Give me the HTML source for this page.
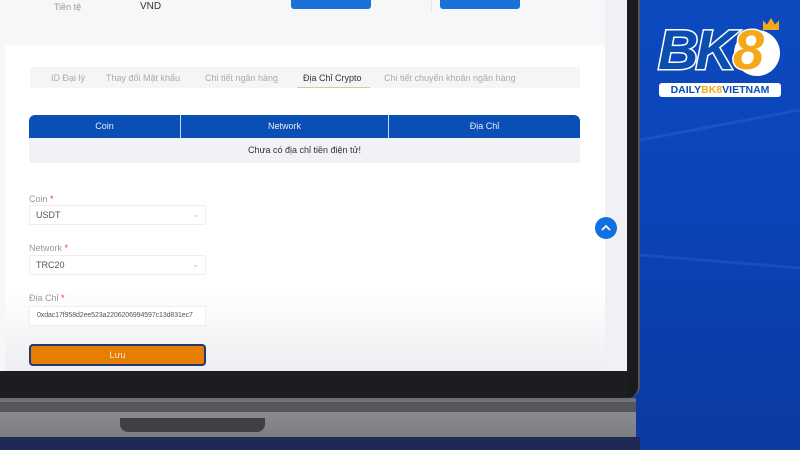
<!DOCTYPE html>
<html><head><meta charset="utf-8"><style>
*{margin:0;padding:0;box-sizing:border-box}
body{width:800px;height:450px;overflow:hidden;position:relative;background:#0b47b8;font-family:"Liberation Sans","Noto Sans CJK SC",sans-serif}
.bg{position:absolute;left:630px;top:0;width:170px;height:450px;background:linear-gradient(180deg,#0d49bf 0%,#0a45b8 40%,#0b3fae 70%,#0c3a9f 100%)}
.screen{position:absolute;left:0;top:0;width:630px;height:372px;background:#f6f7f9}
.card{position:absolute;left:5px;top:45px;width:600px;height:327px;background:linear-gradient(180deg,#fff 0%,#fff 75%,#eceef1 100%)}
.rightstrip{position:absolute;left:605px;top:0;width:23px;height:372px;background:#eff1f4}
.bezel{position:absolute;left:627px;top:0;width:13px;height:398px;background:#1a1b1d;border-radius:0 0 12px 0;border-right:2px solid #55575b}
.bezelb{position:absolute;left:0;top:371px;width:638px;height:27px;background:#1c1d1f;border-radius:0 0 14px 0}
.kb{position:absolute;left:0;top:398px;width:636px;height:39px;background:linear-gradient(180deg,#6a6c70 0%,#8b8d91 30%,#7b7d81 100%)}
.kbline{position:absolute;left:0;top:402px;width:636px;height:10px;background:#55575b}
.notch{position:absolute;left:120px;top:418px;width:145px;height:14px;background:#3f4044;border-radius:0 0 8px 8px}
.bottom{position:absolute;left:0;top:437px;width:640px;height:13px;background:#1e2a55}
.t{position:absolute;font-size:9px;color:#999}
.btn{position:absolute;top:0;height:9px;width:80px;background:#1a72d8;border-radius:0 0 3px 3px}
.tabs{position:absolute;left:30px;top:67px;width:550px;height:21px;background:#f4f5f7}
.tab{position:absolute;top:73px;font-size:9px;color:#aaa}
.th{position:absolute;left:29px;top:115px;width:551px;height:23px;background:#0a4fb5;border-radius:6px 6px 0 0}
.th div{position:absolute;top:0;height:23px;line-height:23px;text-align:center;color:#e8eefa;font-size:9px}
.row{position:absolute;left:29px;top:138px;width:551px;height:25px;background:#f1f2f5;text-align:center;line-height:25px;font-size:9px;color:#333}
.lbl{position:absolute;left:29px;font-size:9px;color:#999}
.lbl b{color:#e33;font-weight:normal}
.inp{position:absolute;left:29px;width:177px;height:20px;border:1px solid #eee;background:#fff;font-size:9px;color:#555;line-height:18px;padding-left:6px;overflow:hidden;white-space:nowrap}
.inp i{position:absolute;right:6px;top:0;font-style:normal;color:#bbb;font-size:8px}
.save{position:absolute;left:29px;top:344px;width:177px;height:22px;background:#e67e05;border:2px solid #1e3a70;border-radius:4px;color:#fde7c8;font-size:9px;text-align:center;line-height:18px}
.up{position:absolute;left:595px;top:217px;width:22px;height:22px;border-radius:50%;background:#1170e0}
</style></head><body>
<div class="bg"></div>
<svg style="position:absolute;left:630px;top:0" width="170" height="450"><path d="M10 140 L170 110" stroke="#2a62c8" stroke-width="3" opacity=".5"/><path d="M10 255 L170 268" stroke="#2a62c8" stroke-width="3" opacity=".4"/></svg>
<div class="screen"></div>
<div class="rightstrip"></div>
<div class="card"></div>
<div class="t" style="left:54px;top:2px">Tiền tệ</div>
<div class="t" style="left:140px;top:1px;color:#333;font-size:10px">VND</div>
<div class="btn" style="left:291px"></div><div class="btn" style="left:440px"></div>
<div style="position:absolute;left:431px;top:0;width:1px;height:12px;background:#e6e6e6"></div>
<div class="tabs"></div>
<div class="tab" style="left:51px">ID Đại lý</div>
<div class="tab" style="left:106px">Thay đổi Mật khẩu</div>
<div class="tab" style="left:205px">Chi tiết ngân hàng</div>
<div class="tab" style="left:303px;color:#333">Địa Chỉ Crypto</div>
<div style="position:absolute;left:297px;top:87px;width:73px;height:1px;background:#e0c59e"></div>
<div class="tab" style="left:384px">Chi tiết chuyển khoản ngân hàng</div>
<div class="th"><div style="left:0;width:151px">Coin</div><div style="left:151px;width:1px;background:#cfdcf2"></div><div style="left:152px;width:207px">Network</div><div style="left:359px;width:1px;background:#cfdcf2"></div><div style="left:360px;width:191px">Địa Chỉ</div></div>
<div class="row">Chưa có địa chỉ tiền điện tử!</div>
<div class="lbl" style="top:194px">Coin <b>*</b></div>
<div class="inp" style="top:205px">USDT<i>⌄</i></div>
<div class="lbl" style="top:243px">Network <b>*</b></div>
<div class="inp" style="top:255px">TRC20<i>⌄</i></div>
<div class="lbl" style="top:293px">Địa Chỉ <b>*</b></div>
<div class="inp" style="top:306px;font-size:7px;padding-left:7px;letter-spacing:-0.1px">0xdac17f958d2ee523a2206206994597c13d831ec7</div>
<div class="save">Lưu</div>
<div class="up"><svg width="22" height="22"><path d="M7 13 L11 9 L15 13" stroke="#fff" stroke-width="1.8" fill="none"/></svg></div>
<div class="bezelb"></div>
<div class="bezel"></div>
<div class="kb"></div>
<div class="kbline"></div>
<div class="notch"></div>
<div class="bottom"></div>
<div style="position:absolute;left:734px;top:30px;width:46px;height:46px;border-radius:50%;background:#fff"></div>
<div style="position:absolute;left:763px;top:18px;width:16px;height:12px;background:#f5a91a;clip-path:polygon(0 100%,0 20%,25% 55%,50% 0,75% 55%,100% 20%,100% 100%)"></div>
<div style="position:absolute;left:658px;top:20px;font:italic 900 56px 'Liberation Sans',sans-serif;color:#0a4fb0;-webkit-text-stroke:3px #fff;paint-order:stroke fill;letter-spacing:-3px;line-height:60px">BK<span style="color:#f5a91a">8</span></div>
<div style="position:absolute;left:659px;top:83px;width:122px;height:14px;background:#fff;border-radius:3px;font:bold 10.5px 'Liberation Sans',sans-serif;color:#0a4fb0;text-align:center;line-height:14px">DAILY<span style="color:#f5a91a">BK8</span>VIETNAM</div>
</body></html>
